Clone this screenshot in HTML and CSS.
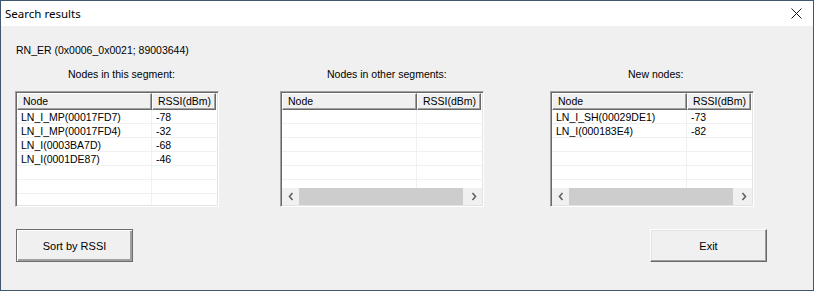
FILE: index.html
```html
<!DOCTYPE html>
<html lang="en">

<head>
    <meta charset="UTF-8">
    <title>Search results</title>
    <link rel="stylesheet" href="styles.css">
</head>

<body>
    <div class="window">
        <div class="titlebar">
            <span class="title">Search results</span>
            <svg class="close" width="11" height="11" viewBox="0 0 11 11">
                <path d="M0.5 0.5 L10.5 10.5 M10.5 0.5 L0.5 10.5" stroke="#1a1a1a" stroke-width="1" fill="none" />
            </svg>
        </div>

        <div class="content">
            <p class="info">RN_ER (0x0006_0x0021; 89003644)</p>

            <div class="panels">
                <div class="panel">
                    <p class="caption caption-this">Nodes in this segment:</p>
                    <div class="list">
                        <div class="head">
                            <span class="hcell">Node</span>
                            <span class="hcell">RSSI(dBm)</span>
                        </div>
                        <div class="rows">
                            <div class="row"><span>LN_I_MP(00017FD7)</span><span>-78</span></div>
                            <div class="row"><span>LN_I_MP(00017FD4)</span><span>-32</span></div>
                            <div class="row"><span>LN_I(0003BA7D)</span><span>-68</span></div>
                            <div class="row"><span>LN_I(0001DE87)</span><span>-46</span></div>
                            <div class="row"><span></span><span></span></div>
                            <div class="row"><span></span><span></span></div>
                            <div class="row"><span></span><span></span></div>
                        </div>
                    </div>
                </div>

                <div class="panel panel-other">
                    <p class="caption caption-other">Nodes in other segments:</p>
                    <div class="list">
                        <div class="head">
                            <span class="hcell">Node</span>
                            <span class="hcell">RSSI(dBm)</span>
                        </div>
                        <div class="rows">
                            <div class="row"><span></span><span></span></div>
                            <div class="row"><span></span><span></span></div>
                            <div class="row"><span></span><span></span></div>
                            <div class="row"><span></span><span></span></div>
                            <div class="row"><span></span><span></span></div>
                            <div class="row"><span></span><span></span></div>
                        </div>
                        <div class="hscroll">
                            <span class="arrow">
                                <svg width="6" height="9" viewBox="0 0 6 9"><path d="M4.5 1 L1.5 4.5 L4.5 8" stroke="#606060" stroke-width="1.6" fill="none" /></svg>
                            </span>
                            <span class="track"><span class="thumb"></span></span>
                            <span class="arrow">
                                <svg width="6" height="9" viewBox="0 0 6 9"><path d="M1.5 1 L4.5 4.5 L1.5 8" stroke="#606060" stroke-width="1.6" fill="none" /></svg>
                            </span>
                        </div>
                    </div>
                </div>

                <div class="panel panel-new">
                    <p class="caption caption-new">New nodes:</p>
                    <div class="list">
                        <div class="head">
                            <span class="hcell">Node</span>
                            <span class="hcell">RSSI(dBm)</span>
                        </div>
                        <div class="rows">
                            <div class="row"><span>LN_I_SH(00029DE1)</span><span>-73</span></div>
                            <div class="row"><span>LN_I(000183E4)</span><span>-82</span></div>
                            <div class="row"><span></span><span></span></div>
                            <div class="row"><span></span><span></span></div>
                            <div class="row"><span></span><span></span></div>
                            <div class="row"><span></span><span></span></div>
                        </div>
                        <div class="hscroll">
                            <span class="arrow">
                                <svg width="6" height="9" viewBox="0 0 6 9"><path d="M4.5 1 L1.5 4.5 L4.5 8" stroke="#606060" stroke-width="1.6" fill="none" /></svg>
                            </span>
                            <span class="track"><span class="thumb"></span></span>
                            <span class="arrow">
                                <svg width="6" height="9" viewBox="0 0 6 9"><path d="M1.5 1 L4.5 4.5 L1.5 8" stroke="#606060" stroke-width="1.6" fill="none" /></svg>
                            </span>
                        </div>
                    </div>
                </div>
            </div>

            <div class="buttons">
                <button type="button" class="btn btn-default">Sort by RSSI</button>
                <button type="button" class="btn">Exit</button>
            </div>
        </div>
    </div>
</body>

</html>
```

FILE: styles.css
```css
* {
    margin: 0;
    padding: 0;
    box-sizing: border-box;
}

body {
    background: #f0f0f0;
    font-family: 'Liberation Sans', Arial, sans-serif;
    font-size: 10.5px;
    color: #000;
}

.window {
    width: 814px;
    height: 291px;
    border: 1px solid #40566e;
    display: flex;
    flex-direction: column;
}

.titlebar {
    height: 25px;
    background: #ffffff;
    display: flex;
    align-items: center;
    justify-content: space-between;
    padding-left: 4px;
    padding-right: 11px;
}

.title {
    font-family: 'Noto Sans', sans-serif;
    font-size: 11.5px;
    color: #000;
}

.content {
    flex: 1;
    background: #f0f0f0;
    padding: 18px 0 0 14px;
}

.info {
    line-height: 13px;
    height: 13px;
    padding-left: 1px;
}

.panels {
    display: flex;
    margin-top: 11px;
}

.panel {
    width: 204px;
}

.panel-other {
    margin-left: 61px;
}

.panel-new {
    margin-left: 66px;
}

.caption {
    line-height: 13px;
    height: 13px;
    margin-bottom: 10px;
    white-space: nowrap;
}

.caption-this {
    padding-left: 53px;
}

.caption-other {
    padding-left: 47px;
}

.caption-new {
    padding-left: 78px;
}

/* sunken list frame */
.list {
    height: 116px;
    background: #ffffff;
    border: 1px solid;
    border-color: #a0a0a0 #ffffff #ffffff #a0a0a0;
    box-shadow: inset 1px 1px 0 #696969, inset -1px -1px 0 #e3e3e3;
    padding: 1px;
    display: flex;
    flex-direction: column;
    overflow: hidden;
}

.head {
    display: grid;
    grid-template-columns: 135px 64px;
    height: 17px;
    flex-shrink: 0;
}

.hcell {
    background: #f0f0f0;
    border-top: 1px solid #ffffff;
    border-left: 1px solid #ffffff;
    border-right: 1px solid #696969;
    border-bottom: 1px solid #696969;
    box-shadow: inset -1px -1px 0 #a0a0a0;
    padding-left: 5px;
    line-height: 15px;
    white-space: nowrap;
    overflow: hidden;
}

.rows {
    flex: 1;
    overflow: hidden;
}

.row {
    display: grid;
    grid-template-columns: 135px 64px;
    height: 14px;
    border-bottom: 1px solid #f0f0f0;
    line-height: 14px;
}

.row span {
    padding-left: 4px;
    white-space: nowrap;
}

.row span:first-child {
    border-right: 1px solid #f0f0f0;
}

.hscroll {
    height: 17px;
    flex-shrink: 0;
    display: flex;
    background: #f0f0f0;
}

.arrow {
    width: 17px;
    display: flex;
    align-items: center;
    justify-content: center;
}

.track {
    flex: 1;
    display: flex;
    padding-right: 2px;
}

.thumb {
    flex: 1;
    background: #cdcdcd;
}

.buttons {
    display: flex;
    margin-top: 22px;
    padding-left: 1px;
}

.btn {
    width: 117px;
    height: 33px;
    font-family: 'Liberation Sans', Arial, sans-serif;
    font-size: 11px;
    color: #000;
    background: #f0f0f0;
    border: 1px solid;
    border-color: #ffffff #696969 #696969 #ffffff;
    box-shadow: inset -1px -1px 0 #a0a0a0, inset 1px 1px 0 #e3e3e3;
}

.btn-default {
    border: 1px solid #6d6d6d;
    box-shadow: inset 1px 1px 0 #ffffff, inset -1px -1px 0 #a0a0a0, inset -2px -2px 0 #a0a0a0;
}

.btn + .btn {
    margin-left: 517px;
}
```
